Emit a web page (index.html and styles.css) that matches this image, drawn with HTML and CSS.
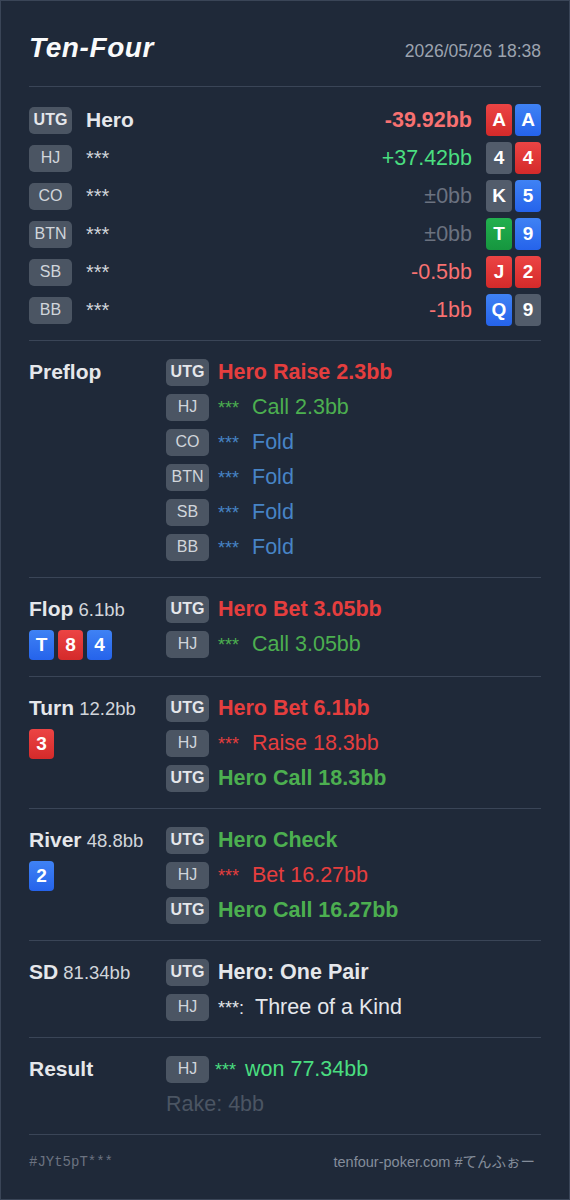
FILE: index.html
```html
<!DOCTYPE html>
<html lang="ja">
<head>
<meta charset="utf-8">
<title>Ten-Four</title>
<link rel="stylesheet" href="styles.css">
</head>
<body>
<div class="sheet">
  <header class="head">
    <h1 class="logo">Ten-Four</h1>
    <span class="date">2026/05/26 18:38</span>
  </header>

  <section class="players">
    <div class="prow">
      <span class="pos strong">UTG</span>
      <span class="pname hero">Hero</span>
      <span class="amt loss strong">-39.92bb</span>
      <span class="hand"><i class="cd red">A</i><i class="cd blue">A</i></span>
    </div>
    <div class="prow">
      <span class="pos">HJ</span>
      <span class="pname">***</span>
      <span class="amt win">+37.42bb</span>
      <span class="hand"><i class="cd gray">4</i><i class="cd red">4</i></span>
    </div>
    <div class="prow">
      <span class="pos">CO</span>
      <span class="pname">***</span>
      <span class="amt even">±0bb</span>
      <span class="hand"><i class="cd gray">K</i><i class="cd blue">5</i></span>
    </div>
    <div class="prow">
      <span class="pos">BTN</span>
      <span class="pname">***</span>
      <span class="amt even">±0bb</span>
      <span class="hand"><i class="cd green">T</i><i class="cd blue">9</i></span>
    </div>
    <div class="prow">
      <span class="pos">SB</span>
      <span class="pname">***</span>
      <span class="amt loss">-0.5bb</span>
      <span class="hand"><i class="cd red">J</i><i class="cd red">2</i></span>
    </div>
    <div class="prow">
      <span class="pos">BB</span>
      <span class="pname">***</span>
      <span class="amt loss">-1bb</span>
      <span class="hand"><i class="cd blue">Q</i><i class="cd gray">9</i></span>
    </div>
  </section>

  <section class="street">
    <div class="slabel"><div class="sname"><b>Preflop</b></div></div>
    <div class="acts">
      <div class="act"><span class="pos strong">UTG</span><span class="atext raise strong">Hero Raise 2.3bb</span></div>
      <div class="act"><span class="pos">HJ</span><span class="atext call"><span class="stars">***</span>Call 2.3bb</span></div>
      <div class="act"><span class="pos">CO</span><span class="atext fold"><span class="stars">***</span>Fold</span></div>
      <div class="act"><span class="pos">BTN</span><span class="atext fold"><span class="stars">***</span>Fold</span></div>
      <div class="act"><span class="pos">SB</span><span class="atext fold"><span class="stars">***</span>Fold</span></div>
      <div class="act"><span class="pos">BB</span><span class="atext fold"><span class="stars">***</span>Fold</span></div>
    </div>
  </section>

  <section class="street">
    <div class="slabel">
      <div class="sname"><b>Flop</b> <span class="pot">6.1bb</span></div>
      <div class="board"><i class="cd sm blue">T</i><i class="cd sm red">8</i><i class="cd sm blue">4</i></div>
    </div>
    <div class="acts">
      <div class="act"><span class="pos strong">UTG</span><span class="atext raise strong">Hero Bet 3.05bb</span></div>
      <div class="act"><span class="pos">HJ</span><span class="atext call"><span class="stars">***</span>Call 3.05bb</span></div>
    </div>
  </section>

  <section class="street">
    <div class="slabel">
      <div class="sname"><b>Turn</b> <span class="pot">12.2bb</span></div>
      <div class="board"><i class="cd sm red">3</i></div>
    </div>
    <div class="acts">
      <div class="act"><span class="pos strong">UTG</span><span class="atext raise strong">Hero Bet 6.1bb</span></div>
      <div class="act"><span class="pos">HJ</span><span class="atext raise"><span class="stars">***</span>Raise 18.3bb</span></div>
      <div class="act"><span class="pos strong">UTG</span><span class="atext call strong">Hero Call 18.3bb</span></div>
    </div>
  </section>

  <section class="street">
    <div class="slabel">
      <div class="sname"><b>River</b> <span class="pot">48.8bb</span></div>
      <div class="board"><i class="cd sm blue">2</i></div>
    </div>
    <div class="acts">
      <div class="act"><span class="pos strong">UTG</span><span class="atext call strong">Hero Check</span></div>
      <div class="act"><span class="pos">HJ</span><span class="atext raise"><span class="stars">***</span>Bet 16.27bb</span></div>
      <div class="act"><span class="pos strong">UTG</span><span class="atext call strong">Hero Call 16.27bb</span></div>
    </div>
  </section>

  <section class="street">
    <div class="slabel">
      <div class="sname"><b>SD</b> <span class="pot">81.34bb</span></div>
    </div>
    <div class="acts">
      <div class="act"><span class="pos strong">UTG</span><span class="atext sd strong">Hero: One Pair</span></div>
      <div class="act"><span class="pos">HJ</span><span class="atext sd"><span class="stars sdstars">***:</span>Three of a Kind</span></div>
    </div>
  </section>

  <section class="street">
    <div class="slabel"><div class="sname"><b>Result</b></div></div>
    <div class="acts">
      <div class="act tight"><span class="pos">HJ</span><span class="atext won"><span class="stars wstars">***</span>won 77.34bb</span></div>
      <div class="act"><span class="atext rake">Rake: 4bb</span></div>
    </div>
  </section>

  <footer class="foot">
    <span class="hash">#JYt5pT***</span>
    <span class="site">tenfour-poker.com #てんふぉー</span>
  </footer>
</div>
</body>
</html>
```

FILE: styles.css
```css
* { box-sizing: border-box; }

html, body {
  margin: 0;
  padding: 0;
  background: #1e293b;
}

body {
  font-family: "Liberation Sans", Arial, "Noto Sans CJK JP", sans-serif;
  color: #e5e7eb;
}

.sheet {
  width: 570px;
  height: 1200px;
  border: 1px solid #3a4557;
  background: #1f2939;
  padding: 28px 28px 0;
}

.head {
  display: flex;
  justify-content: space-between;
  align-items: center;
  padding-bottom: 19px;
  border-bottom: 1px solid #3a4557;
}

.logo {
  margin: 0;
  font-size: 28px;
  line-height: 38px;
  font-weight: 700;
  font-style: italic;
  color: #f9fafb;
  letter-spacing: 0.6px;
}

.date {
  font-size: 17.5px;
  color: #9ca3af;
  padding-top: 7px;
}

.players {
  display: flex;
  flex-direction: column;
  gap: 6px;
  padding: 17px 0 14px;
  border-bottom: 1px solid #3a4557;
}

.prow {
  display: flex;
  align-items: center;
  height: 32px;
}

.pos {
  flex: 0 0 43px;
  height: 27px;
  border-radius: 5px;
  background: #4b5563;
  color: #d1d5db;
  font-size: 16px;
  display: flex;
  align-items: center;
  justify-content: center;
}

.strong { font-weight: 700; }

.pos.strong { color: #e5e7eb; }

.pname {
  margin-left: 14px;
  font-size: 20px;
  color: #d1d5db;
  flex: 1;
}

.pname.hero {
  font-size: 21px;
  font-weight: 700;
  color: #e5e7eb;
}

.amt {
  font-size: 21.5px;
  margin-right: 14px;
}

.loss { color: #f87171; }
.win { color: #4ade80; }
.even { color: #6b7280; }

.hand {
  display: flex;
  gap: 3px;
}

.board {
  display: flex;
  gap: 4px;
}

.cd {
  width: 26px;
  height: 32px;
  border-radius: 4px;
  display: flex;
  align-items: center;
  justify-content: center;
  font-style: normal;
  font-weight: 700;
  font-size: 19px;
  color: #ffffff;
}

.cd.sm {
  width: 25px;
  height: 30px;
}

.cd.red { background: linear-gradient(#ec4444, #d42a2a); }
.cd.blue { background: linear-gradient(#3f82f4, #2563eb); }
.cd.gray { background: #525c6b; }
.cd.green { background: linear-gradient(#22b04f, #16963f); }

.street {
  display: grid;
  grid-template-columns: 137px 1fr;
  padding: 17px 0 16px;
  border-bottom: 1px solid #3a4557;
}

.slabel {
  display: flex;
  flex-direction: column;
  gap: 6px;
}

.sname {
  line-height: 28px;
  font-size: 18.5px;
  color: #d1d5db;
  white-space: nowrap;
}

.sname b {
  font-size: 21px;
  color: #e5e7eb;
}

.acts {
  display: flex;
  flex-direction: column;
  gap: 7px;
}

.act {
  display: flex;
  align-items: center;
  gap: 9px;
  height: 28px;
}

.act.tight { gap: 6px; }

.atext {
  font-size: 21.5px;
  white-space: nowrap;
}

.stars {
  font-size: 18px;
  margin-right: 13px;
}

.wstars { margin-right: 9px; }
.sdstars { margin-right: 11px; }

.raise { color: #e53e3e; }
.call { color: #4caf50; }
.fold { color: #4784c6; }
.sd { color: #e5e7eb; }
.won { color: #4ade80; }
.rake { color: #4b5563; }

.foot {
  display: flex;
  justify-content: space-between;
  align-items: center;
  padding-top: 17px;
  line-height: 20px;
  font-size: 14.5px;
  color: #848d9b;
}

.hash {
  font-family: "Liberation Mono", "DejaVu Sans Mono", monospace;
  font-size: 14px;
  color: #6b7280;
}

.site {
  padding-right: 6px;
}
```
